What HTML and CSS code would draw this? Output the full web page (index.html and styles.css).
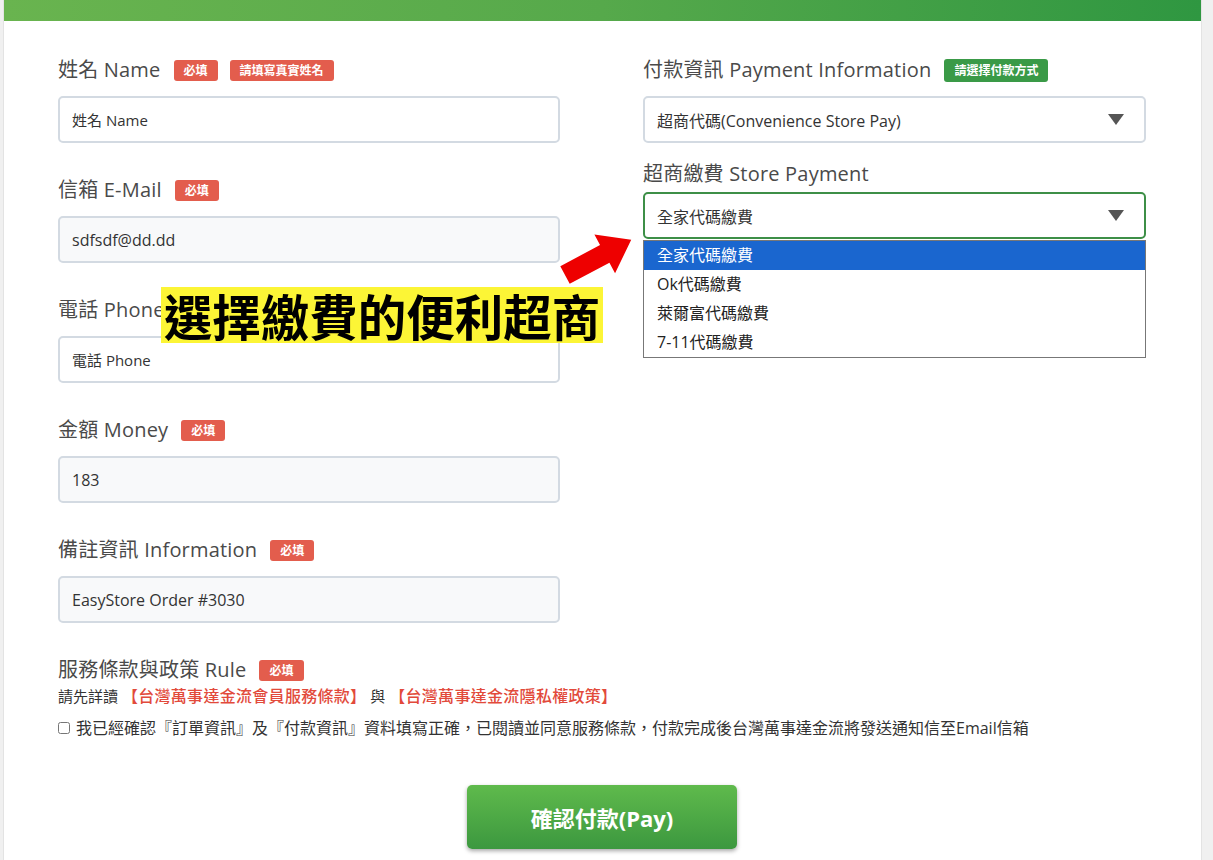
FILE: index.html
```html
<!DOCTYPE html>
<html lang="zh-Hant">
<head>
<meta charset="utf-8">
<title>付款資訊</title>
<link rel="stylesheet" href="styles.css">
</head>
<body>
<div class="page">
  <div class="card">
    <div class="card-head"></div>
    <form class="card-body">
      <div class="cols">
        <div class="col">
          <div class="field">
            <div class="label"><span class="label-text">姓名 Name</span><span class="badge badge-red">必填</span><span class="badge badge-red">請填寫真實姓名</span></div>
            <input class="input" type="text" placeholder="姓名 Name">
          </div>
          <div class="field">
            <div class="label"><span class="label-text">信箱 E-Mail</span><span class="badge badge-red">必填</span></div>
            <input class="input filled" type="text" value="sdfsdf@dd.dd">
          </div>
          <div class="field">
            <div class="label"><span class="label-text">電話 Phone</span></div>
            <input class="input" type="text" placeholder="電話 Phone">
          </div>
          <div class="field">
            <div class="label"><span class="label-text">金額 Money</span><span class="badge badge-red">必填</span></div>
            <input class="input filled" type="text" value="183">
          </div>
          <div class="field">
            <div class="label"><span class="label-text">備註資訊 Information</span><span class="badge badge-red">必填</span></div>
            <input class="input filled" type="text" value="EasyStore Order #3030">
          </div>
        </div>
        <div class="col">
          <div class="field field-pay">
            <div class="label"><span class="label-text">付款資訊 Payment Information</span><span class="badge badge-green">請選擇付款方式</span></div>
            <div class="select">
              <span>超商代碼(Convenience Store Pay)</span>
              <svg class="caret" viewBox="0 0 16 11"><path d="M0 0H16L8 11Z"/></svg>
            </div>
          </div>
          <div class="field">
            <div class="label label-tight"><span class="label-text">超商繳費 Store Payment</span></div>
            <div class="select active">
              <span>全家代碼繳費</span>
              <svg class="caret" viewBox="0 0 16 11"><path d="M0 0H16L8 11Z"/></svg>
            </div>
            <ul class="dropdown">
              <li class="option selected">全家代碼繳費</li>
              <li class="option">Ok代碼繳費</li>
              <li class="option">萊爾富代碼繳費</li>
              <li class="option">7-11代碼繳費</li>
            </ul>
          </div>
        </div>
      </div>
      <div class="rule">
        <div class="label label-rule"><span class="label-text">服務條款與政策 Rule</span><span class="badge badge-red">必填</span></div>
        <p class="rule-text">請先詳讀 <a class="rule-link">【台灣萬事達金流會員服務條款】</a> 與 <a class="rule-link">【台灣萬事達金流隱私權政策】</a></p>
        <label class="agree"><input type="checkbox" class="agree-box"><span>我已經確認『訂單資訊』及『付款資訊』資料填寫正確，已閱讀並同意服務條款，付款完成後台灣萬事達金流將發送通知信至Email信箱</span></label>
      </div>
      <div class="actions">
        <button type="button" class="pay-btn">確認付款(Pay)</button>
      </div>
    </form>
  </div>
  <svg class="arrow" viewBox="0 0 85 70">
    <g transform="translate(10 50) rotate(-28)">
      <polygon points="0,-10 45,-10 45,-22 75,0 45,22 45,10 0,10"/>
    </g>
  </svg>
  <div class="callout">選擇繳費的便利超商</div>
</div>
</body>
</html>
```
FILE: styles.css
```css
body {
  margin: 0;
  background: #f0f0f0;
  font-family: "Open Sans", "Noto Sans CJK TC", sans-serif;
  color: #333;
}

.page {
  position: relative;
}

.card {
  margin-left: 3px;
  width: 1199px;
  box-sizing: border-box;
  background: #fff;
  border-left: 1px solid #e3e3e3;
  border-right: 1px solid #e3e3e3;
}

.card-head {
  height: 21px;
  background: linear-gradient(90deg, #69b44f 0%, #56a94b 50%, #2f9741 100%);
}

.card-body {
  padding: 35px 55px 40px 54px;
}

.cols {
  display: grid;
  grid-template-columns: 502px 503px;
  column-gap: 83px;
}

.field {
  margin-bottom: 33px;
}

.field-pay {
  margin-bottom: 17px;
}

.label {
  display: flex;
  align-items: center;
  gap: 12px;
  height: 28px;
  line-height: 28px;
  font-size: 20px;
  color: #4a4a4a;
  margin-bottom: 12px;
}

.label-text {
  letter-spacing: 0.2px;
  margin-right: 1px;
}

.label-tight {
  margin-bottom: 4px;
}

.label-rule {
  margin-bottom: 0;
}

.badge {
  display: inline-block;
  height: 21px;
  line-height: 21px;
  padding: 0 10px;
  border-radius: 3px;
  font-size: 12px;
  font-weight: 700;
  color: #fff;
}

.badge-red {
  background: #e35d4d;
}

.badge-green {
  height: 23px;
  line-height: 23px;
  background: #3a9a47;
}

.input {
  display: block;
  width: 100%;
  height: 47px;
  box-sizing: border-box;
  border: 2px solid #d3dae2;
  border-radius: 5px;
  padding: 0 12px;
  font: 16px "Open Sans", "Noto Sans CJK TC", sans-serif;
  color: #333;
  background: #fff;
  outline: none;
}

.input::placeholder {
  color: #333;
  opacity: 1;
  font-size: 15px;
}

.input.filled {
  background: #f8f9fa;
}

.select {
  display: flex;
  align-items: center;
  justify-content: space-between;
  height: 47px;
  box-sizing: border-box;
  border: 2px solid #d3dae2;
  border-radius: 5px;
  padding: 0 20px 0 12px;
  font-size: 16px;
  color: #333;
  background: #fff;
}

.select.active {
  border-color: #3d8f47;
}

.caret {
  width: 16px;
  height: 11px;
  fill: #555;
}

.dropdown {
  list-style: none;
  margin: 1px 0 0;
  padding: 0;
  border: 1px solid #777;
}

.option {
  height: 29px;
  line-height: 29px;
  padding: 0 13px;
  font-size: 16px;
  color: #222;
}

.option.selected {
  background: #1a66cf;
  color: #fff;
}

.rule-text {
  margin: 0;
  font-size: 15px;
  line-height: 24px;
  color: #333;
}

.rule-link {
  color: #e24a3b;
  font-size: 16px;
  font-weight: 500;
  letter-spacing: 0.3px;
}

.agree {
  display: flex;
  align-items: center;
  margin-top: 8px;
  font-size: 16px;
  line-height: 24px;
  color: #333;
}

.agree-box {
  width: 12px;
  height: 12px;
  margin: 0 6px 0 0;
}

.actions {
  display: flex;
  justify-content: center;
  margin-top: 45px;
}

.pay-btn {
  width: 270px;
  height: 64px;
  border: 0;
  border-radius: 5px;
  background: linear-gradient(#5fba4c, #3c983f);
  color: #fff;
  font: 700 22px "Open Sans", "Noto Sans CJK TC", sans-serif;
  box-shadow: 0 2px 4px rgba(0, 0, 0, 0.35);
}

.arrow {
  position: absolute;
  left: 555px;
  top: 225px;
  width: 85px;
  height: 70px;
  fill: #ee0000;
}

.callout {
  position: absolute;
  left: 161px;
  top: 287px;
  width: 442px;
  height: 56px;
  background: #fcf536;
  color: #000;
  font: 700 48.5px/56px "Noto Sans CJK TC", sans-serif;
  text-align: center;
}
```
